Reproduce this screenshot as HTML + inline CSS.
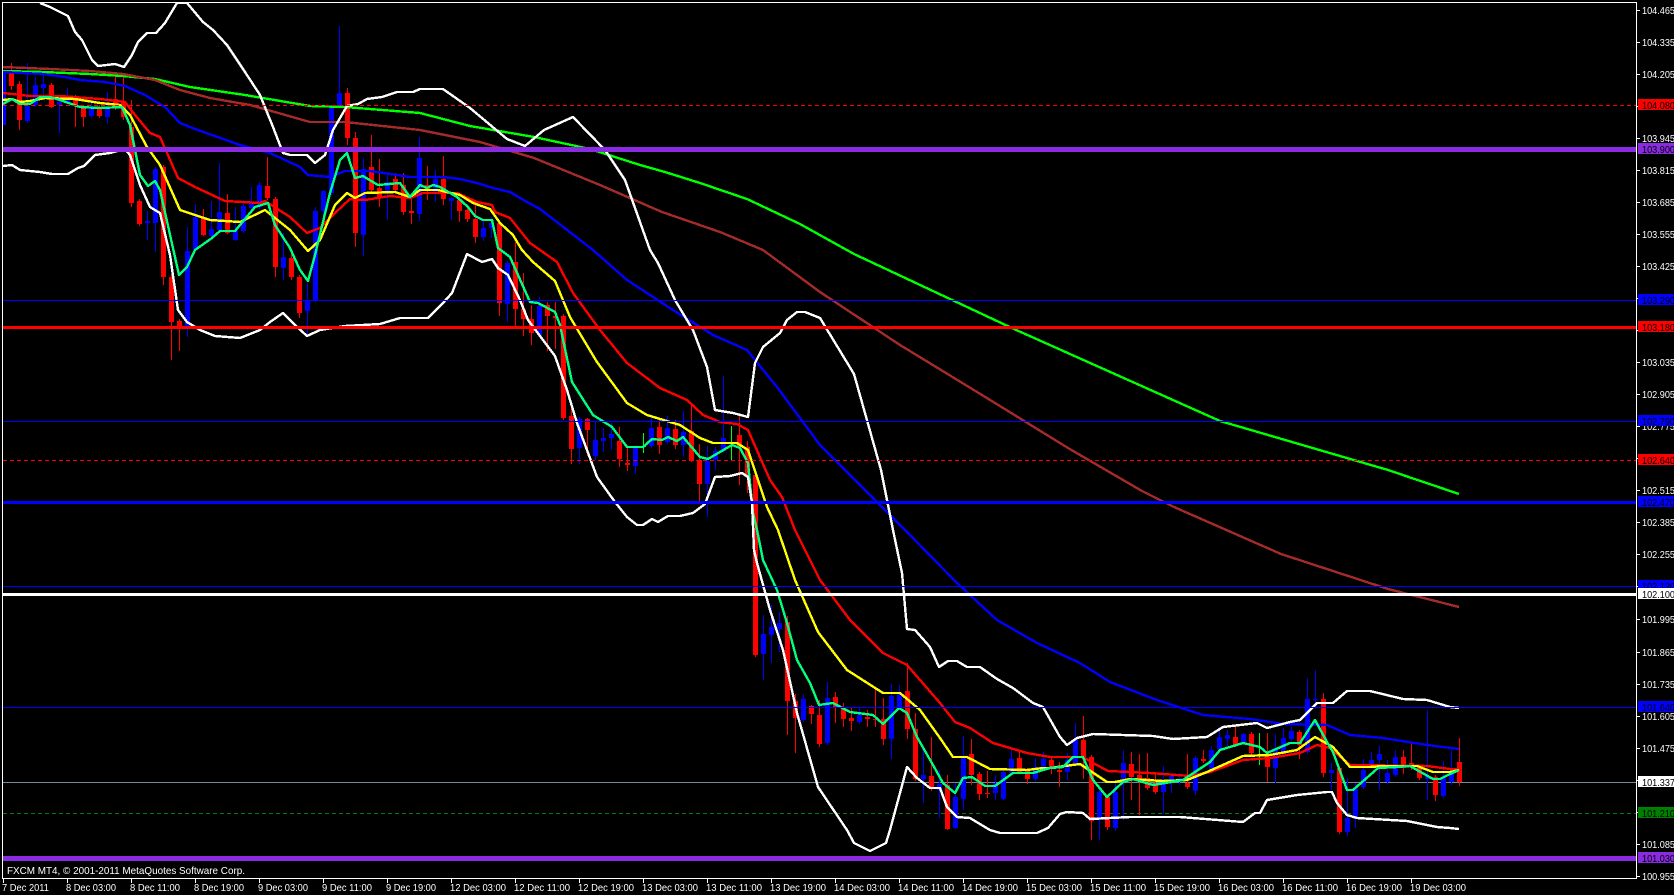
<!DOCTYPE html>
<html><head><meta charset="utf-8"><title>FXCM MT4 chart</title>
<style>
html,body{margin:0;padding:0;background:#000;width:1674px;height:895px;overflow:hidden}
svg{display:block;position:absolute;left:0;top:0}
text{font-family:"Liberation Sans",sans-serif;font-size:10.5px;fill:#fff}
.l text,text.d{fill:#000}
polyline{fill:none;stroke-width:2.4;stroke-linejoin:round}
</style></head><body>
<svg width="1674" height="895" viewBox="0 0 1674 895" shape-rendering="crispEdges">
<rect width="1674" height="895" fill="#000"/>
<!-- bid line and dotted levels beneath candles -->
<path d="M3 782.5H1636" stroke="#778899" fill="none"/>
<path d="M3 813.5H1636" stroke="#008000" stroke-dasharray="4 3" fill="none"/>
<!-- blue wicks -->
<path fill="none" stroke="#0000ff" stroke-width="1" d="M27.5 63V123M35.5 77V107M43.5 74V95M59.5 100V133M67.5 88V104M91.5 100V118M107.5 92V124M147.5 211V240M155.5 167V252M187.5 227V337M195.5 204V252M211.5 201V238M219.5 163V232M235.5 207V241M243.5 200V233M251.5 187V210M259.5 182V209M283.5 233V280M307.5 283V337M315.5 207V302M323.5 190V225M331.5 105V195M339.5 26V107M363.5 158V256M387.5 173V220M419.5 137V221M435.5 170V202M451.5 197V220M483.5 220V241M491.5 217V238M507.5 261V322M539.5 297V337M579.5 417V464M595.5 422V460M603.5 428V452M611.5 423V450M635.5 445V474M651.5 417V448M667.5 416V444M683.5 411V457M707.5 446V517M715.5 447V470M723.5 376V453M763.5 615V680M771.5 605V663M779.5 612V652M803.5 694V722M827.5 682V745M859.5 708V724M891.5 684V759M899.5 685V709M923.5 750V803M939.5 770V818M955.5 783V829M963.5 736V810M995.5 775V800M1003.5 770V800M1011.5 750V775M1035.5 758V781M1043.5 752V770M1067.5 753V780M1075.5 723V765M1099.5 790V840M1115.5 780V831M1123.5 750V820M1163.5 766V814M1171.5 774V793M1179.5 773V785M1195.5 756V795M1211.5 746V773M1219.5 727V751M1227.5 730V746M1243.5 733V744M1275.5 734V783M1283.5 728V754M1291.5 727V741M1307.5 678V754M1315.5 670V709M1331.5 763V790M1347.5 778V836M1355.5 783V828M1363.5 759V789M1371.5 752V768M1379.5 746V790M1387.5 760V784M1395.5 750V777M1427.5 710V800M1443.5 761V798M1451.5 750V785"/>
<!-- blue bodies -->
<path fill="none" stroke="#0000ff" stroke-width="5" d="M3.5 72V125M27.5 106V121M35.5 85V105M43.5 84V88M59.5 102V105M67.5 99V102M91.5 107V116M107.5 107V117M147.5 221V223M155.5 169V223M187.5 251V328M195.5 217V250M211.5 229V236M219.5 212V230M235.5 230V240M243.5 206V231M251.5 203V208M259.5 185V207M283.5 257V268M307.5 301V311M315.5 211V300M323.5 191V211M331.5 107V193M339.5 93V105M363.5 169V235M387.5 182V193M419.5 158V214M435.5 179V193M451.5 198V201M483.5 228V237M491.5 223V228M507.5 263V304M539.5 306V335M579.5 419V448M595.5 440V456M603.5 438V441M611.5 434V438M635.5 447V466M651.5 428V446M667.5 428V442M683.5 432V445M707.5 461V484M715.5 451V460M723.5 438V451M763.5 634V654M771.5 627V635M779.5 623V629M803.5 699V720M827.5 698V743M859.5 715V722M891.5 696V739M899.5 694V707M923.5 775V779M939.5 784V790M955.5 797V828M963.5 758V799M995.5 783V793M1003.5 772V799M1011.5 759V773M1035.5 767V779M1043.5 759V768M1067.5 760V772M1075.5 740V763M1099.5 792V820M1115.5 792V828M1123.5 763V779M1163.5 783V792M1171.5 776V783M1179.5 778V780M1195.5 758V791M1211.5 750V771M1219.5 737V749M1227.5 735V739M1243.5 734V742M1275.5 748V768M1283.5 738V752M1291.5 731V739M1307.5 699V752M1315.5 699V700M1331.5 770V773M1347.5 818V832M1355.5 789V818M1363.5 770V787M1371.5 760V766M1379.5 754V760M1387.5 773V782M1395.5 757V775M1427.5 777V779M1443.5 777V796M1451.5 772V782"/>
<!-- red wicks -->
<path fill="none" stroke="#ff0000" stroke-width="1" d="M11.5 63V90M19.5 81V130M51.5 83V108M75.5 95V127M83.5 105V127M99.5 105V118M115.5 75V110M123.5 75V120M131.5 100V207M139.5 199V226M163.5 165V285M171.5 275V360M179.5 319V351M203.5 209V236M227.5 194V234M267.5 157V200M275.5 197V277M291.5 252V280M299.5 275V318M347.5 88V145M355.5 132V247M371.5 135V192M379.5 159V207M395.5 173V192M403.5 173V215M411.5 197V224M427.5 166V200M443.5 156V205M459.5 197V222M467.5 205V222M475.5 205V243M499.5 221V316M515.5 242V327M523.5 273V336M531.5 305V345M547.5 302V351M555.5 302V349M563.5 314V420M571.5 405V464M587.5 418V456M619.5 427V467M627.5 445V471M659.5 420V454M675.5 420V449M691.5 404V462M699.5 444V501M739.5 413V485M747.5 441V493M755.5 473V657M787.5 616V735M795.5 694V753M811.5 705V724M819.5 700V747M835.5 692V723M843.5 703V727M851.5 707V731M867.5 710V727M875.5 688V727M883.5 698V745M907.5 663V739M915.5 713V781M931.5 737V791M947.5 775V830M971.5 739V785M979.5 772V800M987.5 771V798M1019.5 750V774M1027.5 768V784M1051.5 758V774M1059.5 762V787M1083.5 716V779M1091.5 755V840M1107.5 795V830M1131.5 752V800M1139.5 754V815M1147.5 753V790M1155.5 773V794M1187.5 754V789M1203.5 750V763M1235.5 726V747M1251.5 732V755M1267.5 733V782M1299.5 730V759M1323.5 693V777M1339.5 766V834M1403.5 750V774M1411.5 743V770M1419.5 766V780M1435.5 775V801M1459.5 738V786"/>
<!-- red bodies -->
<path fill="none" stroke="#ff0000" stroke-width="5" d="M11.5 72V86M19.5 84V120M51.5 85V107M75.5 97V105M83.5 107V117M99.5 107V116M115.5 99V107M123.5 103V117M131.5 127V203M139.5 201V224M163.5 167V277M171.5 277V322M179.5 321V327M203.5 218V235M227.5 213V233M267.5 186V198M275.5 199V267M291.5 258V277M299.5 277V313M347.5 93V138M355.5 138V233M371.5 167V190M379.5 188V197M395.5 179V190M403.5 185V212M411.5 211V213M427.5 185V190M443.5 179V199M459.5 200V211M467.5 210V219M475.5 219V237M499.5 223V303M515.5 262V309M523.5 309V319M531.5 319V333M547.5 305V316M555.5 316V318M563.5 316V418M571.5 416V449M587.5 419V430M619.5 441V459M627.5 463V465M659.5 427V445M675.5 429V445M691.5 431V461M699.5 460V484M739.5 435V447M747.5 447V477M755.5 475V655M787.5 622V701M795.5 701V718M811.5 706V714M819.5 715V744M835.5 697V707M843.5 708V719M851.5 718V721M867.5 717V719M875.5 719V720M883.5 719V739M907.5 691V729M915.5 729V779M931.5 776V789M947.5 785V829M971.5 754V775M979.5 774V794M987.5 793V794M1019.5 758V772M1027.5 770V779M1051.5 760V767M1059.5 770V772M1083.5 740V757M1091.5 757V821M1107.5 797V827M1131.5 764V777M1139.5 775V779M1147.5 778V788M1155.5 783V792M1187.5 783V787M1203.5 759V761M1235.5 737V745M1251.5 734V753M1267.5 755V767M1299.5 732V745M1323.5 699V773M1339.5 768V832M1403.5 757V768M1411.5 763V767M1419.5 768V778M1435.5 777V795M1459.5 762V782"/>
<!-- green dojis -->
<path fill="none" stroke="#00ff00" stroke-width="1" d="M643.5 433V453M731.5 426V460M1259.5 733V765M641 446.5H646M729 442.5H734M1257 755.5H1262"/>
<!-- moving averages -->
<polyline stroke="#00ff00" points="3,71 43,72 90,74 123,76 155,79 190,87 245,95 310,106 345,107 420,113 470,126 534,137 590,149 640,165 665,172 700,183 747,199 800,224 854,254 1014,329 1220,421 1388,470 1459,494"/>
<polyline stroke="#a52a2a" points="3,67 50,69 90,71 123,74 155,80 180,90 210,98 250,105 310,122 345,122 420,130 480,142 534,158 600,185 662,212 720,232 763,250 820,292 900,345 982,395 1068,448 1142,491 1174,507 1281,554 1388,589 1459,607"/>
<polyline stroke="#0000ff" points="3,72 43,74 65,77 80,80 105,82 125,86 145,95 165,107 180,123 195,129 240,145 270,153 300,167 308,175 330,177 345,171 370,171 410,177 443,177 460,179 477,183 493,188 510,192 527,202 540,209 593,250 627,280 673,310 713,335 747,350 777,387 820,445 905,530 957,583 997,620 1037,643 1080,663 1110,682 1157,700 1203,715 1250,719 1283,724 1327,725 1350,735 1383,738 1427,745 1459,749"/>
<polyline stroke="#ff0000" points="3,93 30,96 60,96 100,99 125,102 135,115 150,133 160,137 178,178 195,187 225,201 260,203 265,201 290,217 307,233 320,228 335,213 350,199 365,200 390,196 410,198 423,193 457,193 477,202 492,205 495,212 510,218 530,243 540,250 557,262 573,293 600,330 627,363 660,388 687,400 703,415 720,422 737,424 748,430 770,480 782,497 795,530 820,580 850,620 883,653 907,665 940,703 955,722 970,728 993,743 1027,753 1050,757 1083,757 1093,763 1108,771 1150,773 1190,776 1210,772 1243,760 1270,758 1300,753 1317,745 1330,748 1350,765 1427,766 1450,769 1459,769"/>
<polyline stroke="#ffff00" points="3,100 12,99 20,102 30,101 45,98 75,99 100,103 120,105 130,115 147,147 160,165 180,210 195,215 210,220 240,222 265,210 290,230 308,251 320,240 335,205 347,193 355,198 365,193 395,192 410,197 420,190 438,190 460,195 473,203 490,209 500,223 513,235 522,250 533,262 555,281 570,317 597,362 627,403 647,415 680,425 700,438 713,443 737,443 748,450 767,507 778,530 795,580 818,632 847,670 883,693 900,693 920,710 940,738 953,757 967,757 990,769 1027,770 1043,768 1050,768 1080,764 1107,782 1115,782 1130,779 1163,781 1187,780 1207,772 1243,756 1270,755 1297,750 1315,737 1333,747 1350,767 1370,767 1383,766 1417,766 1433,772 1450,772 1459,770"/>
<polyline stroke="#00ff7f" points="3,104 12,99 20,104 30,104 40,97 50,97 60,100 80,107 100,108 122,107 130,125 140,175 148,186 155,181 160,190 179,275 187,267 195,250 212,238 220,231 235,231 255,207 268,203 275,225 290,248 300,270 308,281 315,255 330,193 340,160 347,153 355,178 363,176 378,185 400,183 410,197 420,185 427,188 433,185 440,187 457,197 468,207 475,216 483,220 492,220 498,248 510,257 530,302 538,303 555,312 560,325 572,382 593,415 612,427 627,447 643,447 652,439 662,440 668,437 677,441 683,437 700,457 708,459 732,445 740,448 748,463 753,513 757,530 763,560 777,590 787,623 797,660 810,683 819,705 833,703 850,712 873,715 883,724 899,708 907,713 917,737 933,765 943,783 955,793 963,778 972,777 985,786 995,786 1013,773 1033,773 1050,768 1063,767 1073,757 1083,757 1093,780 1107,797 1123,782 1133,779 1153,785 1183,780 1210,762 1220,750 1243,743 1260,747 1267,753 1290,743 1300,743 1315,720 1327,742 1333,752 1347,790 1353,790 1378,768 1397,767 1410,766 1433,779 1440,779 1450,774 1459,770"/>
<!-- Bollinger bands -->
<polyline stroke="#ffffff" points="40,3 50,7 68,16 75,32 82,40 92,60 98,66 115,64 124,67 132,55 138,42 147,33 156,33 165,23 177,3 187,3 203,22 213,30 227,45 245,72 260,95 273,127 283,153 290,155 307,155 315,163 325,155 333,130 347,106 358,104 367,99 382,97 397,92 413,92 420,89 443,89 470,108 507,139 525,146 544,130 573,117 605,150 625,180 650,250 658,263 675,300 693,330 707,367 715,410 733,413 748,417 755,363 763,347 780,333 787,320 797,312 805,312 820,318 854,374 881,470 893,530 902,573 907,629 915,630 930,647 939,667 948,661 957,661 967,667 980,667 997,679 1013,688 1033,703 1043,707 1060,737 1067,745 1077,738 1093,734 1153,736 1173,739 1207,737 1223,727 1257,723 1267,728 1290,722 1300,720 1317,703 1333,703 1347,691 1370,691 1403,699 1427,700 1450,707 1459,708"/>
<polyline stroke="#ffffff" points="3,166 12,165 20,170 40,172 52,174 68,174 78,168 84,166 95,155 110,153 125,149 130,155 140,185 150,207 160,213 170,255 178,310 187,322 200,330 215,336 240,338 260,330 270,322 283,313 295,325 307,336 320,330 345,326 380,324 400,318 428,318 443,303 452,293 467,254 482,262 492,259 498,268 508,275 520,300 528,320 555,356 567,390 577,423 597,477 615,502 627,517 637,525 643,525 652,519 658,522 668,516 680,516 693,513 705,504 715,477 730,476 742,473 748,477 752,503 754,550 757,563 770,610 783,650 797,713 818,787 847,830 854,843 870,851 886,843 890,830 907,767 917,778 930,788 940,788 947,807 957,817 970,818 990,830 1000,833 1037,833 1048,828 1060,814 1067,812 1083,813 1090,819 1130,817 1180,817 1243,822 1255,813 1260,813 1267,800 1297,795 1327,792 1332,792 1337,803 1347,815 1357,818 1407,821 1437,827 1450,828 1459,829"/>
<!-- horizontal objects -->
<path d="M3 105.5H1636" stroke="#ff0000" stroke-dasharray="4 3" fill="none"/>
<path d="M3 460.5H1636" stroke="#ff0000" stroke-dasharray="4 3" fill="none"/>
<rect x="3" y="147" width="1633" height="5" fill="#8a2be2"/>
<rect x="3" y="856" width="1633" height="5" fill="#8a2be2"/>
<rect x="3" y="326" width="1633" height="3" fill="#ff0000"/>
<rect x="3" y="501" width="1633" height="3" fill="#0000ff"/>
<rect x="3" y="593" width="1633" height="3" fill="#ffffff"/>
<path d="M3 300.5H1636M3 421.5H1636M3 586.5H1636M3 707.5H1636" stroke="#0000ff" fill="none"/>
<!-- frame -->
<rect x="2.5" y="2.5" width="1634" height="876" fill="none" stroke="#fff"/>
<rect x="0" y="0" width="2" height="895" fill="#000"/>
<path stroke="#fff" fill="none" d="M1637 10.5h3M1637 42.5h3M1637 74.5h3M1637 106.5h3M1637 138.5h3M1637 170.5h3M1637 202.5h3M1637 234.5h3M1637 266.5h3M1637 298.5h3M1637 330.5h3M1637 362.5h3M1637 394.5h3M1637 426.5h3M1637 458.5h3M1637 490.5h3M1637 522.5h3M1637 554.5h3M1637 586.5h3M1637 619.5h3M1637 652.5h3M1637 684.5h3M1637 716.5h3M1637 748.5h3M1637 780.5h3M1637 812.5h3M1637 844.5h3M1637 876.5h3M3.5 879v4M67.5 879v4M131.5 879v4M195.5 879v4M259.5 879v4M323.5 879v4M387.5 879v4M451.5 879v4M515.5 879v4M579.5 879v4M643.5 879v4M707.5 879v4M771.5 879v4M835.5 879v4M899.5 879v4M963.5 879v4M1027.5 879v4M1091.5 879v4M1155.5 879v4M1219.5 879v4M1283.5 879v4M1347.5 879v4M1411.5 879v4"/>
<!-- price scale -->
<text x="1642" y="14" textLength="33" lengthAdjust="spacingAndGlyphs">104.465</text>
<text x="1642" y="46" textLength="33" lengthAdjust="spacingAndGlyphs">104.335</text>
<text x="1642" y="78" textLength="33" lengthAdjust="spacingAndGlyphs">104.205</text>
<text x="1642" y="142" textLength="33" lengthAdjust="spacingAndGlyphs">103.945</text>
<text x="1642" y="174" textLength="33" lengthAdjust="spacingAndGlyphs">103.815</text>
<text x="1642" y="206" textLength="33" lengthAdjust="spacingAndGlyphs">103.685</text>
<text x="1642" y="238" textLength="33" lengthAdjust="spacingAndGlyphs">103.555</text>
<text x="1642" y="270" textLength="33" lengthAdjust="spacingAndGlyphs">103.425</text>
<text x="1642" y="366" textLength="33" lengthAdjust="spacingAndGlyphs">103.035</text>
<text x="1642" y="398" textLength="33" lengthAdjust="spacingAndGlyphs">102.905</text>
<text x="1642" y="430" textLength="33" lengthAdjust="spacingAndGlyphs">102.775</text>
<text x="1642" y="494" textLength="33" lengthAdjust="spacingAndGlyphs">102.515</text>
<text x="1642" y="526" textLength="33" lengthAdjust="spacingAndGlyphs">102.385</text>
<text x="1642" y="558" textLength="33" lengthAdjust="spacingAndGlyphs">102.255</text>
<text x="1642" y="623" textLength="33" lengthAdjust="spacingAndGlyphs">101.995</text>
<text x="1642" y="656" textLength="33" lengthAdjust="spacingAndGlyphs">101.865</text>
<text x="1642" y="688" textLength="33" lengthAdjust="spacingAndGlyphs">101.735</text>
<text x="1642" y="720" textLength="33" lengthAdjust="spacingAndGlyphs">101.605</text>
<text x="1642" y="752" textLength="33" lengthAdjust="spacingAndGlyphs">101.475</text>
<text x="1642" y="848" textLength="33" lengthAdjust="spacingAndGlyphs">101.085</text>
<text x="1642" y="880" textLength="33" lengthAdjust="spacingAndGlyphs">100.955</text>
<!-- level tags -->
<g class="l">
<rect x="1638" y="99" width="36" height="11" fill="#ff0000"/><text x="1642" y="109" textLength="33" lengthAdjust="spacingAndGlyphs">104.080</text>
<rect x="1638" y="143" width="36" height="11" fill="#8a2be2"/><text x="1642" y="153" textLength="33" lengthAdjust="spacingAndGlyphs">103.900</text>
<rect x="1638" y="294" width="36" height="11" fill="#0000ff"/><text x="1642" y="304" textLength="33" lengthAdjust="spacingAndGlyphs">103.290</text>
<rect x="1638" y="321" width="36" height="11" fill="#ff0000"/><text x="1642" y="331" textLength="33" lengthAdjust="spacingAndGlyphs">103.180</text>
<rect x="1638" y="415" width="36" height="11" fill="#0000ff"/><text x="1642" y="425" textLength="33" lengthAdjust="spacingAndGlyphs">102.790</text>
<rect x="1638" y="454" width="36" height="11" fill="#ff0000"/><text x="1642" y="464" textLength="33" lengthAdjust="spacingAndGlyphs">102.640</text>
<rect x="1638" y="496" width="36" height="11" fill="#0000ff"/><text x="1642" y="506" textLength="33" lengthAdjust="spacingAndGlyphs">102.470</text>
<rect x="1638" y="580" width="36" height="11" fill="#0000ff"/><text x="1642" y="590" textLength="33" lengthAdjust="spacingAndGlyphs">102.130</text>
<rect x="1638" y="588" width="36" height="11" fill="#ffffff"/><text x="1642" y="598" textLength="33" lengthAdjust="spacingAndGlyphs">102.100</text>
<rect x="1638" y="701" width="36" height="11" fill="#0000ff"/><text x="1642" y="711" textLength="33" lengthAdjust="spacingAndGlyphs">101.640</text>
<rect x="1638" y="776" width="36" height="11" fill="#ffffff"/><text x="1642" y="786" textLength="33" lengthAdjust="spacingAndGlyphs">101.337</text>
<rect x="1638" y="807" width="36" height="11" fill="#008000"/><text x="1642" y="817" textLength="33" lengthAdjust="spacingAndGlyphs">101.210</text>
<rect x="1638" y="852" width="36" height="11" fill="#8a2be2"/><text x="1642" y="862" textLength="33" lengthAdjust="spacingAndGlyphs">101.030</text>
</g>
<!-- copyright -->
<text x="7" y="874" textLength="238" lengthAdjust="spacingAndGlyphs">FXCM MT4, © 2001-2011 MetaQuotes Software Corp.</text>
<!-- time scale -->
<text x="2" y="891" textLength="47" lengthAdjust="spacingAndGlyphs">7 Dec 2011</text>
<text x="66" y="891" textLength="50" lengthAdjust="spacingAndGlyphs">8 Dec 03:00</text>
<text x="130" y="891" textLength="50" lengthAdjust="spacingAndGlyphs">8 Dec 11:00</text>
<text x="194" y="891" textLength="50" lengthAdjust="spacingAndGlyphs">8 Dec 19:00</text>
<text x="258" y="891" textLength="50" lengthAdjust="spacingAndGlyphs">9 Dec 03:00</text>
<text x="322" y="891" textLength="50" lengthAdjust="spacingAndGlyphs">9 Dec 11:00</text>
<text x="386" y="891" textLength="50" lengthAdjust="spacingAndGlyphs">9 Dec 19:00</text>
<text x="450" y="891" textLength="56" lengthAdjust="spacingAndGlyphs">12 Dec 03:00</text>
<text x="514" y="891" textLength="56" lengthAdjust="spacingAndGlyphs">12 Dec 11:00</text>
<text x="578" y="891" textLength="56" lengthAdjust="spacingAndGlyphs">12 Dec 19:00</text>
<text x="642" y="891" textLength="56" lengthAdjust="spacingAndGlyphs">13 Dec 03:00</text>
<text x="706" y="891" textLength="56" lengthAdjust="spacingAndGlyphs">13 Dec 11:00</text>
<text x="770" y="891" textLength="56" lengthAdjust="spacingAndGlyphs">13 Dec 19:00</text>
<text x="834" y="891" textLength="56" lengthAdjust="spacingAndGlyphs">14 Dec 03:00</text>
<text x="898" y="891" textLength="56" lengthAdjust="spacingAndGlyphs">14 Dec 11:00</text>
<text x="962" y="891" textLength="56" lengthAdjust="spacingAndGlyphs">14 Dec 19:00</text>
<text x="1026" y="891" textLength="56" lengthAdjust="spacingAndGlyphs">15 Dec 03:00</text>
<text x="1090" y="891" textLength="56" lengthAdjust="spacingAndGlyphs">15 Dec 11:00</text>
<text x="1154" y="891" textLength="56" lengthAdjust="spacingAndGlyphs">15 Dec 19:00</text>
<text x="1218" y="891" textLength="56" lengthAdjust="spacingAndGlyphs">16 Dec 03:00</text>
<text x="1282" y="891" textLength="56" lengthAdjust="spacingAndGlyphs">16 Dec 11:00</text>
<text x="1346" y="891" textLength="56" lengthAdjust="spacingAndGlyphs">16 Dec 19:00</text>
<text x="1410" y="891" textLength="56" lengthAdjust="spacingAndGlyphs">19 Dec 03:00</text>
</svg>
</body></html>
